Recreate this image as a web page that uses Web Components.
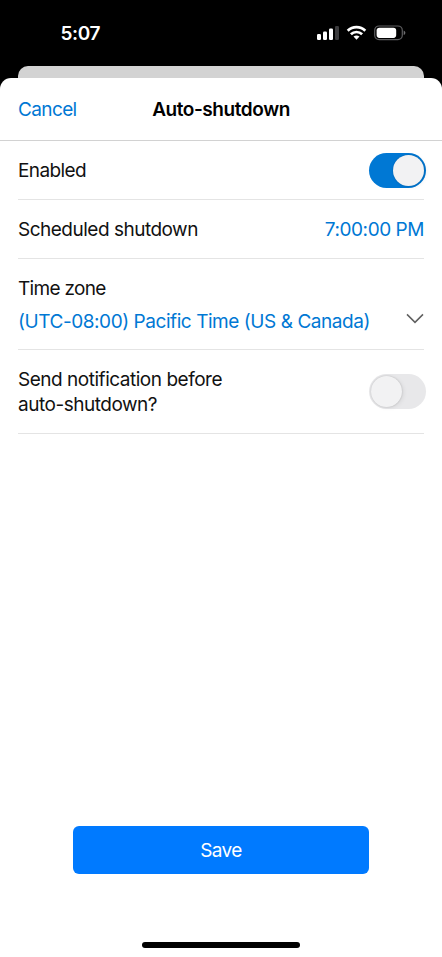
<!DOCTYPE html>
<html lang="en">
<head>
<meta charset="utf-8">
<title>Auto-shutdown</title>
<style>
  html, body { margin: 0; height: 100%; background: #000; overflow: hidden; }
  body { font-family: Inter, "Liberation Sans", sans-serif; font-size: 19px; line-height: 25px; color: #111; --accent: #0078d4; }
</style>
</head>
<body>
<app-screen>
  <status-bar slot="status" time="5:07"></status-bar>
  <sheet-header slot="header"><span slot="action">Cancel</span>Auto-shutdown</sheet-header>
  <setting-row style="height:58px;letter-spacing:-.6px">Enabled<toggle-switch slot="end" on></toggle-switch></setting-row>
  <setting-row style="height:58px;letter-spacing:-.5px">Scheduled shutdown<value-text slot="end">7:00:00 PM</value-text></setting-row>
  <zone-picker label="Time zone">(UTC-08:00) Pacific Time (US &amp; Canada)</zone-picker>
  <setting-row style="height:83px;letter-spacing:-.48px">Send notification before<br>auto-shutdown?<toggle-switch slot="end"></toggle-switch></setting-row>
  <save-button slot="footer">Save</save-button>
</app-screen>
<script>
const define = (name, html, setup) => {
  const template = document.createElement('template');
  template.innerHTML = html;
  customElements.define(name, class extends HTMLElement {
    constructor() {
      super();
      this.attachShadow({ mode: 'open' }).append(template.content.cloneNode(true));
    }
    connectedCallback() { if (setup) setup(this, this.shadowRoot); }
  });
};

define('app-screen', `
<style>
  :host { display: flex; flex-direction: column; width: 442px; height: 957px; background: #000; }
  .behind { flex: none; height: 11.5px; margin: 0 18px; background: #d3d3d3; border-radius: 10px 10px 0 0; }
  .sheet { flex: 1; display: flex; flex-direction: column; background: #fff; border-radius: 11px 11px 0 0; }
  .rows { flex: 1; display: flex; flex-direction: column; padding: 0 18px; }
  .home { flex: none; align-self: center; width: 158px; height: 6px; margin: 68px 0 9px; border-radius: 3px; background: #000; }
</style>
<slot name="status"></slot>
<div class="behind"></div>
<div class="sheet">
  <slot name="header"></slot>
  <div class="rows"><slot></slot></div>
  <slot name="footer"></slot>
  <div class="home"></div>
</div>`);

define('status-bar', `
<style>
  :host { flex: none; display: flex; justify-content: space-between; height: 66px; padding: 0 36px 0 60.5px; box-sizing: border-box; color: #fff; font-weight: 600; letter-spacing: -.4px; }
  span { padding-top: 20.5px; }
  svg { display: block; margin-top: 23px; }
</style>
<span></span>
<svg width="90" height="20" viewBox="0 0 90 20">
  <g fill="#fff">
    <rect x="1" y="11" width="4" height="6" rx="1.2"/>
    <rect x="7" y="8.6" width="4" height="8.4" rx="1.2"/>
    <rect x="13" y="5.6" width="4" height="11.4" rx="1.2"/>
    <rect x="19" y="3" width="4" height="14" rx="1.2" fill="#3c3c3e"/>
  </g>
  <g fill="none" stroke="#fff" stroke-width="2.7">
    <path d="M31.7 7.8A12.6 12.6 0 0 1 49.3 7.8"/>
    <path d="M34.9 11.3A8 8 0 0 1 46.1 11.3"/>
  </g>
  <path fill="#fff" d="M37.5 13.6Q40.5 11.2 43.5 13.6L40.5 16.8Z"/>
  <rect x="58.7" y="3" width="27.6" height="13.7" rx="4.4" fill="none" stroke="#5e5e60" stroke-width="1.2"/>
  <rect x="60.6" y="4.8" width="19.6" height="10.1" rx="2.8" fill="#fff"/>
  <path fill="#6e6e70" d="M87.7 7.5Q89.4 8.2 89.4 9.8Q89.4 11.4 87.7 12.1Z"/>
</svg>`, (host, root) => { root.querySelector('span').textContent = host.getAttribute('time'); });

define('sheet-header', `
<style>
  :host { flex: none; display: grid; grid-template-columns: 1fr auto 1fr; align-items: center; height: 63.5px; padding: 2px 18px 0; box-sizing: border-box; border-bottom: 1px solid #d2d2d2; color: #000; }
  .action { color: var(--accent); letter-spacing: -.62px; }
  .title { font-weight: 600; letter-spacing: -.43px; }
</style>
<div class="action"><slot name="action"></slot></div>
<div class="title"><slot></slot></div>`);

define('setting-row', `
<style>
  :host { flex: none; display: flex; justify-content: space-between; align-items: center; border-bottom: 1px solid #e4e4e4; }
  div { padding-top: 1px; }
</style>
<div><slot></slot></div><slot name="end"></slot>`);

define('value-text', `
<style>:host { color: var(--accent); letter-spacing: -.45px; padding-top: 1px; }</style><slot></slot>`);

define('toggle-switch', `
<style>
  :host { flex: none; display: flex; align-items: center; width: 57.5px; height: 35px; box-sizing: border-box; padding: 0 2px; margin-right: -2px; border-radius: 18px; background: #e8e8ea; }
  :host([on]) { background: #0078d4; justify-content: flex-end; }
  i { width: 31px; height: 31px; border-radius: 50%; background: #f2f2f3; box-shadow: 0 0 2px rgba(0,0,0,.2), 2px 1px 4px rgba(0,0,0,.06); }
</style><i></i>`);

define('zone-picker', `
<style>
  :host { flex: none; display: block; height: 91px; padding-top: 17px; box-sizing: border-box; border-bottom: 1px solid #e4e4e4; }
  .label { letter-spacing: -.7px; }
  .value { display: flex; justify-content: space-between; align-items: flex-start; margin-top: 7.5px; color: var(--accent); letter-spacing: -.44px; white-space: nowrap; }
  svg { flex: none; margin-top: 4px; }
</style>
<div class="label"></div>
<div class="value"><span><slot></slot></span>
<svg width="18" height="12" viewBox="0 0 18 12"><path d="M1 1.4L9 9.4L17 1.4" fill="none" stroke="#606060" stroke-width="1.5"/></svg></div>`,
(host, root) => { root.querySelector('.label').textContent = host.getAttribute('label'); });

define('save-button', `
<style>
  :host { flex: none; align-self: center; display: block; }
  button { display: block; width: 296px; height: 48px; padding: 0; border: 0; border-radius: 6px; background: #007aff; color: #fff; font: inherit; letter-spacing: -.6px; }
</style><button><slot></slot></button>`);
</script>
</body>
</html>
